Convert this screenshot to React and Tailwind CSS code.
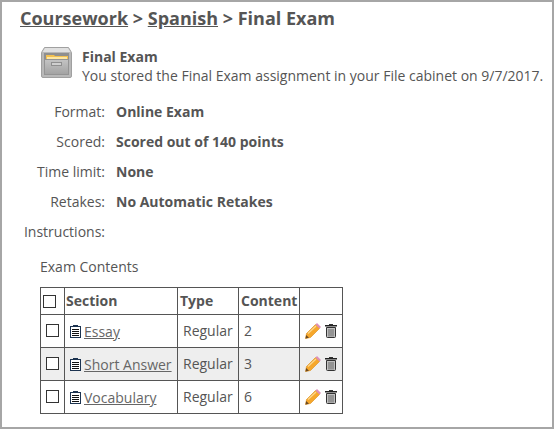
const rows = [
  { name: "Essay", type: "Regular", content: 2 },
  { name: "Short Answer", type: "Regular", content: 3, shaded: true },
  { name: "Vocabulary", type: "Regular", content: 6 },
];

const details = [
  { label: "Format:", value: "Online Exam" },
  { label: "Scored:", value: "Scored out of 140 points" },
  { label: "Time limit:", value: "None" },
  { label: "Retakes:", value: "No Automatic Retakes" },
];

function CabinetIcon() {
  return (
    <svg width="31" height="31" viewBox="0 0 31 31" className="shrink-0">
      <defs>
        <linearGradient id="front" x1="0" y1="0" x2="0" y2="1">
          <stop offset="0" stopColor="#c4c4c4" />
          <stop offset="1" stopColor="#a2a2a2" />
        </linearGradient>
      </defs>
      <path d="M3.500 0.500h24l3 5V29a1.500 1.500 0 0 1-1.500 1.500H2A1.500 1.500 0 0 1 .5 29V5.500z" fill="#b8b8b8" stroke="#a0a0a0" />
      <path d="M4 1h23l2.500 4h-28z" fill="#e0e0e0" />
      <rect x="3" y="6" width="25" height="7" fill="#8f8f8f" />
      <path d="M5 8h8l1 1h13v4H5z" fill="#f3c04f" />
      <rect x="6" y="10" width="20" height="3" fill="#fde7a3" />
      <rect x="3.500" y="12.500" width="24" height="15" fill="url(#front)" stroke="#949494" />
      <rect x="10.500" y="15.500" width="10" height="3" fill="#cfcfcf" stroke="#8f8f8f" />
    </svg>
  );
}

function DocIcon() {
  return (
    <svg width="11" height="13" viewBox="0 0 11 13" className="inline-block shrink-0">
      <rect x="0.500" y="1.500" width="10" height="11" fill="#fff" stroke="#1c3350" />
      <rect x="3" y="0" width="5" height="2" fill="#1c3350" />
      <path d="M2 4.500h7M2 6.500h7M2 8.500h7M2 10.500h7" stroke="#111" />
    </svg>
  );
}

function PencilIcon() {
  return (
    <svg width="16" height="16" viewBox="0 0 16 16" className="shrink-0">
      <path d="M0.500 15.500l1-5L10.500 1.500l4 4-9 9z" fill="#f6a72b" stroke="#d98a17" strokeWidth="0.600" />
      <path d="M10.500 1.500l1.500-1.500 4 4-1.500 1.500z" fill="#dd8fb8" />
      <path d="M0.500 15.500l.7-3.500 2.800 2.800z" fill="#6b4a23" />
      <path d="M3 10.500L11 3" stroke="#fbd78d" strokeWidth="1.300" />
    </svg>
  );
}

function TrashIcon() {
  return (
    <svg width="12" height="14" viewBox="0 0 12 14" className="shrink-0">
      <rect x="4" y="0" width="4" height="1.500" fill="#333" />
      <rect x="0" y="1" width="12" height="1.500" fill="#222" />
      <path d="M1.500 3.500h9v9a1 1 0 0 1-1 1h-7a1 1 0 0 1-1-1z" fill="#c2c2c2" stroke="#333" />
      <path d="M4 5v7.500M6 5v7.500M8 5v7.500" stroke="#666" />
    </svg>
  );
}

function Checkbox() {
  return <span className="block w-[13px] h-[13px] border border-[#333] bg-white" />;
}

export default function App() {
  return (
    <div
      className="w-[554px] h-[429px] overflow-hidden border-2 border-[#a6a6a6] bg-white text-[#555] text-[14px]"
      style={{ fontFamily: '"Open Sans", sans-serif' }}
    >
      <h1 className="ml-[18px] mt-[4px] text-[18px] leading-[24px] font-bold">
        <span className="underline">Coursework</span> &gt; <span className="underline">Spanish</span> &gt; Final Exam
      </h1>

      <div className="flex gap-[10px] ml-[39px] mt-[17px]">
        <CabinetIcon />
        <div className="leading-[19px]">
          <div className="font-bold">Final Exam</div>
          <div className="whitespace-nowrap">You stored the Final Exam assignment in your File cabinet on 9/7/2017.</div>
        </div>
      </div>

      <div className="mt-[11px]">
        {details.map((d) => (
          <div key={d.label} className="flex h-[30px] items-center">
            <div className="w-[103px] text-right">{d.label}</div>
            <div className="ml-[11px] font-bold">{d.value}</div>
          </div>
        ))}
      </div>

      <div className="w-[103px] text-right leading-[30px] mt-[1px]">Instructions:</div>

      <div className="ml-[38px] mt-[5px] leading-[30px]">Exam Contents</div>

      <table className="ml-[38px] mt-[5px] border-collapse table-fixed w-[302px] text-[14px]">
        <colgroup>
          <col className="w-[24px]" />
          <col className="w-[113px]" />
          <col className="w-[61px]" />
          <col className="w-[61px]" />
          <col className="w-[43px]" />
        </colgroup>
        <thead>
          <tr className="h-[27px]">
            <th className="border border-[#555] px-[2px]"><Checkbox /></th>
            <th className="border border-[#555] px-[1px] pb-[2px] text-left font-bold">Section</th>
            <th className="border border-[#555] px-[2px] pb-[2px] text-left font-bold">Type</th>
            <th className="border border-[#555] px-[2px] pb-[2px] text-left font-bold">Content</th>
            <th className="border border-[#555]"></th>
          </tr>
        </thead>
        <tbody>
          {rows.map((r) => (
            <tr key={r.name} className={r.shaded ? "h-[33px] bg-[#eeeeee]" : "h-[33px]"}>
              <td className="border border-[#555] pl-[5px] pb-[2px]"><Checkbox /></td>
              <td className="border border-[#555] pl-[5px] pt-[2px] whitespace-nowrap">
                <span className="inline-flex items-center gap-[3px] underline text-[#666]">
                  <DocIcon />
                  {r.name}
                </span>
              </td>
              <td className="border border-[#555] pl-[5px] pb-[2px]">{r.type}</td>
              <td className="border border-[#555] pl-[5px] pb-[2px]">{r.content}</td>
              <td className="border border-[#555] pl-[5px]">
                <div className="flex items-center gap-[4px]">
                  <PencilIcon />
                  <TrashIcon />
                </div>
              </td>
            </tr>
          ))}
        </tbody>
      </table>
    </div>
  );
}
